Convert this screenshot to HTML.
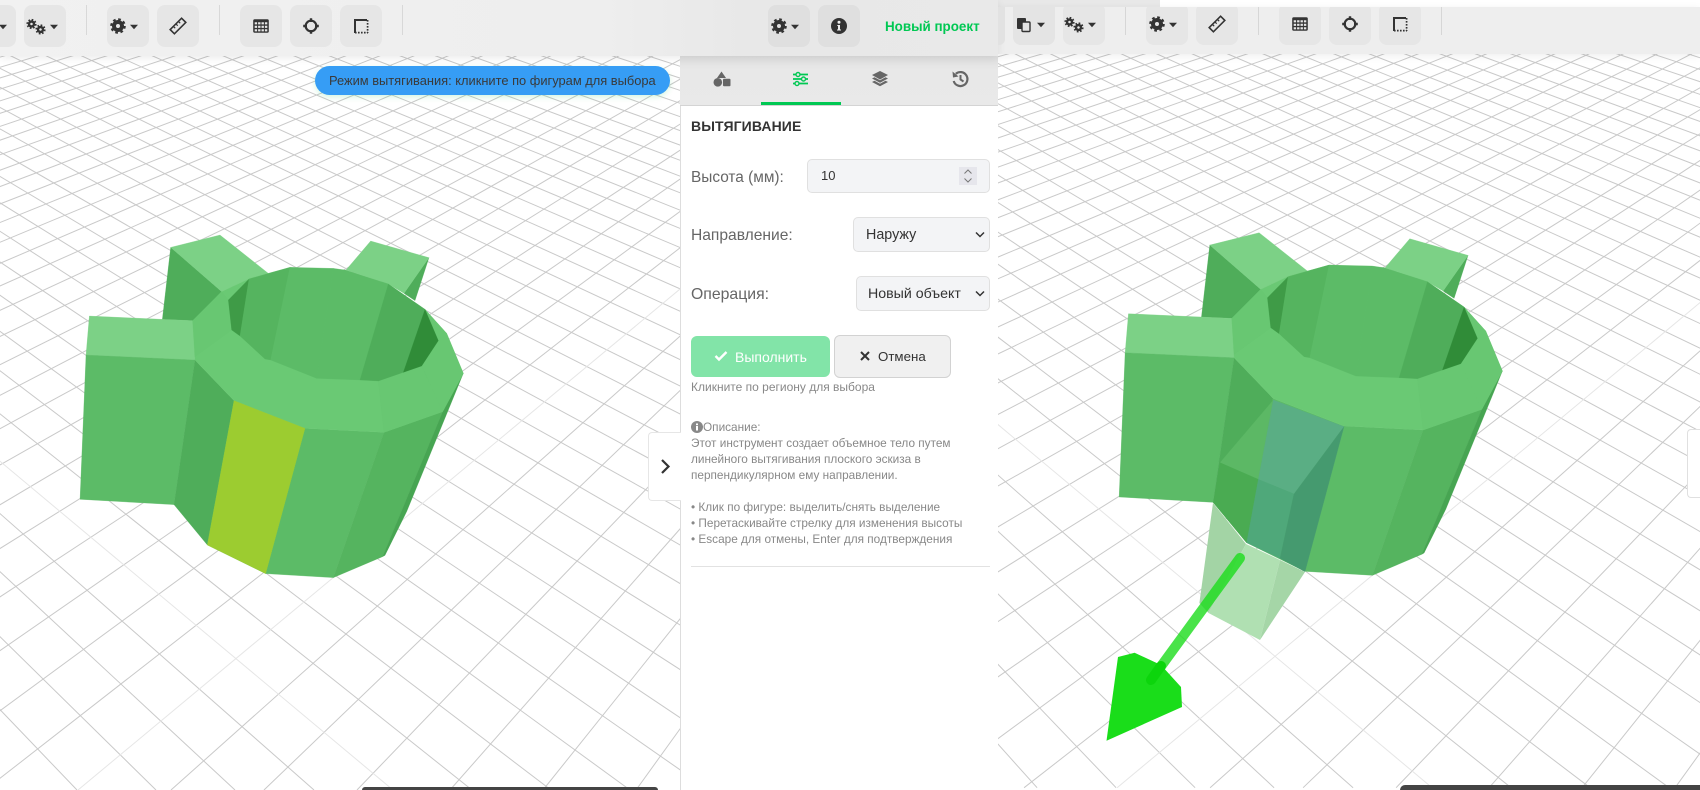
<!DOCTYPE html>
<html lang="ru"><head><meta charset="utf-8"><title>Вытягивание</title>
<style>
html,body{margin:0;padding:0;width:1700px;height:790px;overflow:hidden;background:#fff;font-family:"Liberation Sans","DejaVu Sans",sans-serif}
.t{position:absolute;white-space:nowrap}
.box{position:absolute;box-sizing:border-box}
.b{position:absolute;width:42px;height:42px;border-radius:8px;background:#e6e6e6}
svg.i{position:absolute;overflow:visible}
.a{fill:#7cd186;stroke:#7cd186}
.c{fill:#6ac974;stroke:#6ac974}
.d{fill:#5cbb67;stroke:#5cbb67}
.e{fill:#55b45f;stroke:#55b45f}
.f{fill:#4fad5a;stroke:#4fad5a}
.g{fill:#68c772;stroke:#68c772}
.h{fill:#3f9b47;stroke:#3f9b47}
.j{fill:#308c38;stroke:#308c38}
.k{fill:#47a552;stroke:#47a552}
polygon{stroke-width:.8;stroke-linejoin:round}
.ghost polygon{stroke:none}
</style></head><body>
<svg width="1700" height="790" viewBox="0 0 1700 790" style="position:absolute;left:0;top:0">
<defs>
<clipPath id="cl"><rect x="0" y="50" width="680" height="740"/></clipPath>
<clipPath id="cr"><rect x="998" y="50" width="702" height="740"/></clipPath>
<g id="grid" fill="none" stroke-width="1">
<path stroke="#c9c9c9" d="M-1197-540L-81 790M-1197-540L-2 790M-1197-540L77 790M-1197-540L156 790M-1197-540L235 790M-1197-540L314 790M-1197-540L472 790M-1197-540L551 790M-1197-540L630 790M-1197-540L709 790M-1197-540L788 790M-1197-540L867 790M-1197-540L946 790M-1197-540L1025 790M-1197-540L1104 790M-1197-540L1183 790M-1197-540L1262 790M-1197-540L1341 790M-1197-540L1420 790M-1197-540L1499 790M-1197-540L1578 790M-1197-540L1657 790M-1197-540L1736 790M-1197-540L1815 790M-1197-540L1894 790M-1197-540L1973 790M-1197-540L2052 790M-1197-540L2131 790M-1197-540L2210 790M-1197-540L2289 790M-1197-540L2368 790M-1197-540L2447 790M-1197-540L2526 790M-1197-540L2605 790M-1197-540L2684 790M-1197-540L2763 790M-1197-540L2842 790M-1197-540L2921 790M-1197-540L3000 790"/>
<path stroke="#c9c9c9" d="M1472-370L171 790M1472-370L264 790M1472-370L357 790M1472-370L450 790M1472-370L543 790M1472-370L636 790M1472-370L729 790M1472-370L-15 790M1472-370L-108 790M1472-370L-201 790M1472-370L-294 790M1472-370L-387 790M1472-370L-480 790M1472-370L-573 790M1472-370L-666 790M1472-370L-759 790M1472-370L-852 790M1472-370L-945 790M1472-370L-1038 790M1472-370L-1131 790M1472-370L-1224 790M1472-370L-1317 790M1472-370L-1410 790M1472-370L-1503 790M1472-370L-1596 790M1472-370L-1689 790M1472-370L-1782 790M1472-370L-1875 790M1472-370L-1968 790M1472-370L-2061 790M1472-370L-2154 790M1472-370L-2247 790M1472-370L-2340 790M1472-370L-2433 790M1472-370L-2526 790M1472-370L-2619 790M1472-370L-2712 790M1472-370L-2805 790M1472-370L-2898 790"/>
<path stroke="#e6e6e6" d="M-1197-540L393 790M1472-370L78 790"/>
</g>
<g id="m">
<polygon class="f" points="332,112 485,245 400,332 307,328"/>
<polygon class="a" points="332,112 480,75 625,190 570,205 485,245"/>
<polygon class="f" points="1107,143 1065,272 1032,250"/>
<polygon class="a" points="932,93 1107,143 1032,250 985,222 858,180"/>
<polygon class="a" points="88,318 398,332 405,450 78,435"/>
<polygon class="d" points="78,435 405,450 342,884 60,868"/>
<polygon class="f" points="405,450 522,572 442,1005 342,884"/>
<polygon class="d" points="522,572 735,655 617,1091 442,1005"/>
<polygon class="d" points="735,655 972,667 820,1103 617,1091"/>
<polygon class="e" points="972,667 1148,605 968,1040 820,1103"/>
<polygon class="k" points="1148,605 1210,490 1040,905 975,1036 968,1040"/>
<polygon class="c" points="398,332 485,245 570,205 690,172 855,180 985,222 1095,298 1160,370 1210,490 1148,605 972,667 735,655 522,572 405,450"/>
<polygon class="g" points="398,332 485,245 505,270 515,360 405,440"/>
<polygon class="g" points="1095,298 1160,370 1210,490 1148,605 1085,468 1135,392"/>
<polygon class="g" points="955,513 1085,468 1148,605 972,667"/>
<polygon class="h" points="505,270 567,207 540,378 515,360"/>
<polygon class="e" points="567,207 690,172 632,450 615,447 540,378"/>
<polygon class="d" points="690,172 820,175 770,505 632,450"/>
<polygon class="d" points="820,175 855,180 985,222 900,510 770,505"/>
<polygon class="f" points="985,222 1095,298 1030,487 955,513 900,510"/>
<polygon class="j" points="1095,298 1135,392 1085,468 1030,487"/>
</g>
</defs>
<g clip-path="url(#cl)"><use href="#grid"/></g>
<g clip-path="url(#cr)"><use href="#grid" transform="translate(1039.1,-2.3)"/></g>
<g transform="translate(60,210) scale(.33333)">
<use href="#m"/>
<polygon points="522,572 735,655 617,1091 442,1005" fill="#9ccc30" stroke="#9ccc30"/>
</g>
<g class="ghost">
<polygon points="1213,503 1199.4,603 1208.5,613 1246,544" fill="#a3d4a5"/>
<polygon points="1246,544 1208.5,613 1260,640 1280,560" fill="#b0e0b2"/>
<polygon points="1280,560 1305,572 1260,640" fill="#a5d6a7"/>
</g>
<g transform="translate(1099.1,207.7) scale(.33333)"><use href="#m"/></g>
<g transform="translate(1090,210) scale(.33333)">
<polygon points="550,570 505,808 390,758" fill="#5cb865" stroke="#5cb865"/>
<polygon points="390,758 505,808 470,998 370,878" fill="#4aab52" stroke="#4aab52"/>
<polygon points="550,570 762,650 612,852 505,808" fill="#5aae84" stroke="#5aae84"/>
<polygon points="505,808 612,852 570,1045 470,998" fill="#4fa87a" stroke="#4fa87a"/>
<polygon points="612,852 762,650 645,1085 570,1045" fill="#459a6f" stroke="#459a6f"/>
</g>
<polygon points="1118,657 1134.6,652.7 1161,665 1181,687 1182,707 1106.5,740.7" fill="#1add1a" stroke="none"/>
<line x1="1240" y1="558" x2="1151" y2="680" stroke="#1cdc1c" stroke-opacity=".8" stroke-width="10" stroke-linecap="round"/>
<line x1="1161" y1="666" x2="1151" y2="680" stroke="#0cd50c" stroke-width="10" stroke-linecap="round"/>
</svg>

<!-- bottom bars -->
<div class="box" style="left:362px;top:787px;width:296px;height:3px;background:#444;border-radius:5px 5px 0 0"></div>
<div class="box" style="left:1400px;top:785px;width:300px;height:5px;background:#444;border-radius:5px 0 0 0"></div>

<!-- right top strip -->
<div class="box" style="left:998px;top:0;width:162px;height:7px;background:#e8e8e8"></div>
<div class="box" style="left:1160px;top:0;width:540px;height:7px;background:#fff"></div>
<!-- right toolbar -->
<div class="box" style="left:998px;top:7px;width:702px;height:47px;background:#eee;box-shadow:0 2px 8px rgba(0,0,0,.07);overflow:hidden">
 <div class="b" style="left:-35px;top:-4px;background:#e2e2e2"></div>
 <div class="b" style="left:15px;top:-4px;background:#e4e4e4"></div>
 <div class="b" style="left:65px;top:-4px"></div>
 <div class="box" style="left:127px;top:-2px;width:1px;height:30px;background:#d6d6d6"></div>
 <div class="b" style="left:148px;top:-4px"></div>
 <div class="b" style="left:198px;top:-4px"></div>
 <div class="box" style="left:260px;top:-2px;width:1px;height:30px;background:#d6d6d6"></div>
 <div class="b" style="left:281px;top:-4px"></div>
 <div class="b" style="left:331px;top:-4px"></div>
 <div class="b" style="left:381px;top:-4px"></div>
 <div class="box" style="left:443px;top:-2px;width:1px;height:30px;background:#d6d6d6"></div>
</div>

<!-- panel -->
<div class="box" style="left:680px;top:56px;width:318px;height:734px;background:#fff;border-left:1px solid #ddd"></div>
<div class="box" style="left:680px;top:56px;width:318px;height:50px;background:linear-gradient(#dedede,#e8e8e8 14px,#e9e9e9);border-bottom:1px solid #d4d4d4"></div>
<div class="box" style="left:761px;top:102px;width:80px;height:3px;background:#00c853"></div>

<!-- left toolbar -->
<div class="box" style="left:0;top:0;width:998px;height:56px;background:linear-gradient(90deg,#f1f1f1,#eeeeee 60%,#e8e8e8 75%,#e9e9e9);box-shadow:0 2px 8px rgba(0,0,0,.08)">
 <div class="b" style="left:-26px;top:5px"></div>
 <div class="b" style="left:24px;top:5px"></div>
 <div class="box" style="left:86px;top:5px;width:1px;height:30px;background:#d8d8d8"></div>
 <div class="b" style="left:107px;top:5px"></div>
 <div class="b" style="left:157px;top:5px"></div>
 <div class="box" style="left:219px;top:5px;width:1px;height:30px;background:#d8d8d8"></div>
 <div class="b" style="left:240px;top:5px"></div>
 <div class="b" style="left:290px;top:5px"></div>
 <div class="b" style="left:340px;top:5px"></div>
 <div class="box" style="left:402px;top:5px;width:1px;height:30px;background:#d8d8d8"></div>
 <div class="b" style="left:768px;top:5px;background:#dfdfdf"></div>
 <div class="b" style="left:818px;top:5px;background:#dfdfdf"></div>
 <div class="t" style="left:885px;top:17px;line-height:20px;font-size:13.400px;font-weight:bold;color:#00c853">Новый проект</div>
</div>
<div class="box" style="left:998px;top:7px;width:7px;height:38px;background:#e2e2e2;border-radius:0 0 6px 0"></div>
<div class="box" style="left:1013px;top:7px;width:42px;height:38px;background:#e4e4e4;border-radius:0 0 8px 8px"></div>

<!-- icons -->
<svg class="i" width="1700" height="790" viewBox="0 0 1700 790" style="left:0;top:0">
<defs>
<g id="gear" fill="none" stroke="#333"><circle r="4" stroke-width="4"/><circle r="6.5" stroke-width="2.600" stroke-dasharray="2.600 2.500"/></g>
<g id="gear2" fill="none" stroke="#333"><circle r="2.500" stroke-width="2.400"/><circle r="4.200" stroke-width="1.800" stroke-dasharray="1.650 1.650"/></g>
<path id="car" d="M-4-2.200H4L0 2.200Z" fill="#333"/>
<g id="gears"><use href="#gear2" x="-5.500" y="-4"/><use href="#gear2" x="3.500" y="1.500"/></g>
<g id="ruler" fill="none" stroke="#333" stroke-width="1.600"><path d="M-7.800 3.600L3.600-7.800 7.800-3.600-3.600 7.800Z"/><path d="M-4.300 0.700L-2.800 2.200M-1.800-1.800L-.3-.3M.7-4.300L2.200-2.800" stroke-width="1.200"/></g>
<g id="table"><rect x="-7.800" y="-6.800" width="15.600" height="13.600" rx="1.500" fill="#333"/><path stroke="#e6e6e6" stroke-width="2.200" d="M-6.300-2.700H-3.900M-2.900-2.700H-.5M.5-2.700H2.900M3.900-2.700H6.300M-6.300 .8H-3.900M-2.900 .8H-.5M.5 .8H2.900M3.900 .8H6.300M-6.300 4.300H-3.900M-2.900 4.300H-.5M.5 4.300H2.900M3.900 4.300H6.300"/></g>
<g id="cross" fill="none" stroke="#333"><circle r="5.300" stroke-width="2.200"/><path d="M0-7.800V-4M0 4V7.800M-7.800 0H-4M4 0H7.800" stroke-width="2.400"/></g>
<g id="sq" fill="none" stroke="#333"><path d="M-6 7V-6H6" stroke-width="2"/><path d="M-6 6.600H7M6.600-6V7" stroke-width="1.700" stroke-dasharray="1.600 1.400"/></g>
</defs>
<use href="#car" x="3" y="27"/>
<use href="#gears" x="37" y="28"/><use href="#car" x="54" y="27"/>
<use href="#gear" x="118" y="26"/><use href="#car" x="134" y="27"/>
<use href="#ruler" x="178" y="26"/>
<use href="#table" x="261" y="26"/>
<use href="#cross" x="311" y="26"/>
<use href="#sq" x="361" y="26"/>
<use href="#gear" x="779" y="26"/><use href="#car" x="795" y="27"/>
<circle cx="839" cy="26" r="8" fill="#333"/><circle cx="839" cy="22.300" r="1.500" fill="#eee"/><path d="M837.300 25H840V29.500H841V30.500H837V29.500H838V26H837.300Z" fill="#eee"/>
<rect x="1017" y="18" width="9" height="11" rx="1" fill="#333"/><rect x="1022" y="22" width="8" height="9.500" rx="1" fill="#e4e4e4" stroke="#333" stroke-width="1.400"/><use href="#car" x="1041" y="25"/>
<use href="#gears" x="1075" y="26"/><use href="#car" x="1092" y="25"/>
<use href="#gear" x="1157" y="24"/><use href="#car" x="1173" y="25"/>
<use href="#ruler" x="1217" y="24"/>
<use href="#table" x="1300" y="24"/>
<use href="#cross" x="1350" y="24"/>
<use href="#sq" x="1400" y="24"/>
<!-- tab icons -->
<g fill="#666"><path d="M721.500 71.500L726 78H717Z"/><circle cx="717.800" cy="82.300" r="4.300"/><rect x="723" y="78.700" width="7.500" height="7.500" rx="1"/></g>
<g fill="none" stroke="#00c853" stroke-width="1.800"><path d="M793 74.500H808M793 79H808M793 83.500H808"/><g fill="#e9e9e9" stroke-width="1.400"><circle cx="798" cy="74.500" r="2"/><circle cx="803.500" cy="79" r="2"/><circle cx="797" cy="83.500" r="2"/></g></g>
<g fill="#666"><path d="M880 71L888 75L880 79.500L872 75Z"/><path d="M872 78.500L874.500 77.300L880 80.300L885.500 77.300L888 78.500L880 82.800Z"/><path d="M872 82L874.500 80.800L880 83.800L885.500 80.800L888 82L880 86.300Z"/></g>
<g fill="none" stroke="#666" stroke-width="2.200"><path d="M955.800 73.800A7 7 0 1 1 953.700 81"/><path d="M960.500 75V79.500L963.500 81.500" stroke-width="2"/></g><path d="M952.500 71.500L953 77.500L958.500 76.500Z" fill="#666"/>
</svg>

<!-- pill -->
<div class="box" style="left:315px;top:66px;width:355px;height:29px;background:#369df5;border-radius:15px;box-shadow:0 2px 6px rgba(0,200,83,.18)"></div>
<div class="t" style="left:329px;top:72px;line-height:18px;font-size:12.870px;color:#3a3a3a">Режим вытягивания: кликните по фигурам для выбора</div>

<!-- panel content -->
<div class="t" style="left:691px;top:116px;line-height:20px;font-size:14px;font-weight:bold;color:#333;letter-spacing:.1px">ВЫТЯГИВАНИЕ</div>

<div class="t" style="left:691px;top:168px;line-height:20px;font-size:15.400px;color:#666">Высота (мм):</div>
<div class="box" style="left:807px;top:159px;width:183px;height:34px;background:#f3f4f6;border:1px solid #e0e0e0;border-radius:5px"></div>
<div class="t" style="left:821px;top:167px;line-height:18px;font-size:13px;color:#333">10</div>
<div class="box" style="left:959px;top:167px;width:18px;height:18px;background:#e6e6ec"></div>
<svg class="i" style="left:959px;top:167px" width="18" height="18" fill="none" stroke="#777" stroke-width="1"><path d="M5.500 6.500L9 3L12.500 6.500M5.500 11.500L9 15L12.500 11.500"/></svg>

<div class="t" style="left:691px;top:226px;line-height:20px;font-size:15.600px;color:#666">Направление:</div>
<div class="box" style="left:853px;top:217px;width:137px;height:35px;background:#f3f4f6;border:1px solid #e0e0e0;border-radius:5px"></div>
<div class="t" style="left:866px;top:225px;line-height:20px;font-size:14.300px;color:#333">Наружу</div>
<svg class="i" style="left:975px;top:231px" width="10" height="8" fill="none" stroke="#333" stroke-width="1.500"><path d="M1 1.500L5 5.500L9 1.500"/></svg>

<div class="t" style="left:691px;top:285px;line-height:20px;font-size:15.800px;color:#666">Операция:</div>
<div class="box" style="left:856px;top:276px;width:134px;height:35px;background:#f3f4f6;border:1px solid #e0e0e0;border-radius:5px"></div>
<div class="t" style="left:868px;top:284px;line-height:20px;font-size:14.200px;color:#333">Новый объект</div>
<svg class="i" style="left:975px;top:290px" width="10" height="8" fill="none" stroke="#333" stroke-width="1.500"><path d="M1 1.500L5 5.500L9 1.500"/></svg>

<div class="box" style="left:691px;top:336px;width:139px;height:41px;background:#82e4a8;border-radius:6px"></div>
<svg class="i" style="left:714px;top:350px" width="14" height="12" fill="none" stroke="#fff" stroke-width="2.400"><path d="M1.500 6L5 9.500L12.500 2"/></svg>
<div class="t" style="left:735px;top:347px;line-height:20px;font-size:14px;color:#fff">Выполнить</div>
<div class="box" style="left:834px;top:335px;width:117px;height:43px;background:#f0f0f0;border:1px solid #d2d2d2;border-radius:6px"></div>
<svg class="i" style="left:860px;top:351px" width="10" height="10" fill="none" stroke="#333" stroke-width="2"><path d="M1 1L9 9M9 1L1 9"/></svg>
<div class="t" style="left:878px;top:347px;line-height:20px;font-size:13.300px;color:#333">Отмена</div>

<div class="t" style="left:691px;top:379px;line-height:16px;font-size:12px;color:#888">Кликните по региону для выбора</div>

<svg class="i" style="left:691px;top:421px" width="12" height="12"><circle cx="6" cy="6" r="6" fill="#888"/><rect x="5" y="5" width="2" height="4.500" fill="#fff"/><rect x="5" y="2.500" width="2" height="1.700" fill="#fff"/></svg>
<div class="t" style="left:703px;top:419px;line-height:16px;font-size:11.800px;color:#888">Описание:</div>
<div class="t" style="left:691px;top:435px;line-height:16px;font-size:11.800px;color:#888">Этот инструмент создает объемное тело путем<br>линейного вытягивания плоского эскиза в<br>перпендикулярном ему направлении.<br><br>• Клик по фигуре: выделить/снять выделение<br>• Перетаскивайте стрелку для изменения высоты<br>• Escape для отмены, Enter для подтверждения</div>
<div class="box" style="left:691px;top:566px;width:299px;height:1px;background:#e2e2e2"></div>

<!-- handles -->
<div class="box" style="left:648px;top:432px;width:33px;height:69px;background:#fff;border:1px solid #e6e6e6;border-right:none;border-radius:4px 0 0 4px"></div>
<svg class="i" style="left:660px;top:458px" width="11" height="17" fill="none" stroke="#333" stroke-width="2.200"><path d="M2 2L8.500 8.500L2 15"/></svg>
<div class="box" style="left:1687px;top:429px;width:13px;height:69px;background:#fff;border:1px solid #e0e0e0;border-right:none;border-radius:4px 0 0 4px"></div>
</body></html>
